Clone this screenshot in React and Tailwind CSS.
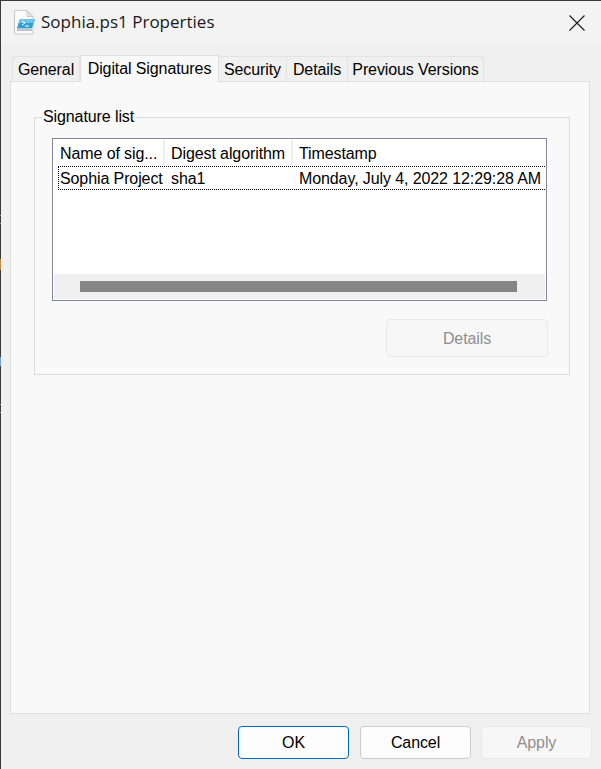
const font = { fontFamily: '"Liberation Sans", Arial, sans-serif', letterSpacing: '-0.1px' };

function FileIcon() {
  return (
    <svg className="w-[22px] h-[25px] shrink-0" viewBox="0 0 22 25">
      <path d="M1.500 0.500h12.500l6 6v17.500h-18.500z" fill="#fbfbfb" stroke="#c9c9c9" />
      <path d="M14 0.500v6h6z" fill="#e4e4e4" stroke="#c9c9c9" />
      <path d="M7 9h15l-3 9H4z" fill="#2f9fd8" />
      <path d="M7 9h15l-1 4H5.500z" fill="#6cc3ec" />
      <path d="M9 11l3 2-3 2" fill="none" stroke="#ffffff" strokeWidth="1" />
      <path d="M12 16h4" stroke="#ffffff" strokeWidth="1" />
      <path d="M4 18h15v3H4z" fill="#b9c9d3" />
    </svg>
  );
}

function Tab({ label, active, width }) {
  if (active) {
    return (
      <div className={`${width} h-[27px] -mb-px z-10 bg-[#f9f9f9] border border-b-0 border-[#dfdfdf] text-[16px] leading-[26px] text-center text-black`}>
        {label}
      </div>
    );
  }
  return (
    <div className={`${width} h-[25px] bg-[#f0f0f0] border border-b-0 border-l-0 first:border-l border-[#e3e3e3] text-[16px] leading-[26px] text-center text-black`}>
      {label}
    </div>
  );
}

function DialogButton({ label, kind, width = 'w-[111px]', height = 'h-[33px]', extra = '' }) {
  const styles = {
    primary: 'bg-[#fdfdfd] border-[#0067c0] text-black',
    normal: 'bg-[#fdfdfd] border-[#cccccc] text-black',
    disabled: 'bg-[#f7f7f7] border-[#e8e8e8] text-[#8f8f8f]',
  };
  return (
    <div className={`${width} ${height} ${extra} rounded-[4px] border flex items-center justify-center text-[16px] ${styles[kind]}`}>
      {label}
    </div>
  );
}

export default function App() {
  return (
    <div className="w-[601px] h-[769px] flex bg-[#f0f0f0] overflow-hidden" style={font}>
      {/* Bit of the desktop showing down the left edge */}
      <div className="w-px h-full flex flex-col shrink-0 bg-[#3a3a3a]">
        <div className="h-[215px] shrink-0" />
        <div className="h-px shrink-0 bg-[#9a9a9a]" />
        <div className="h-[7px] shrink-0" />
        <div className="h-px shrink-0 bg-[#9a9a9a]" />
        <div className="h-[35px] shrink-0" />
        <div className="h-[11px] shrink-0 bg-[#c08a3e]" />
        <div className="h-[87px] shrink-0" />
        <div className="h-[9px] shrink-0 bg-[#6fa3d8]" />
        <div className="h-[38px] shrink-0" />
        <div className="h-px shrink-0 bg-[#9a9a9a]" />
        <div className="h-[7px] shrink-0" />
        <div className="h-px shrink-0 bg-[#9a9a9a]" />
      </div>

      <div className="flex-1 flex flex-col min-w-0">
        <div className="h-px bg-[#3a3a3a] shrink-0" />

        {/* Title bar */}
        <div className="h-[43px] shrink-0 bg-[#f3f3f3] flex items-center pl-[12px] pr-[16px]">
          <FileIcon />
          <div className="ml-[6px] mb-[2px] text-[#1a1a1a]" style={{ fontFamily: '"Open Sans", sans-serif', fontSize: '17px', letterSpacing: '0' }}>
            Sophia.ps1 Properties
          </div>
          <svg className="ml-auto w-[16px] h-[16px]" viewBox="0 0 16 16">
            <path d="M0.500 0.500l15 15M15.500 0.500l-15 15" stroke="#1a1a1a" strokeWidth="1.100" fill="none" />
          </svg>
        </div>

        {/* Tabs */}
        <div className="h-[37px] shrink-0 pl-[11px] flex items-end">
          <Tab label="General" width="w-[68px]" />
          <Tab label="Digital Signatures" width="w-[139px]" active />
          <Tab label="Security" width="w-[68px]" />
          <Tab label="Details" width="w-[61px]" />
          <Tab label="Previous Versions" width="w-[136px]" />
        </div>

        {/* Tab panel */}
        <div className="ml-[9px] w-[580px] h-[633px] shrink-0 bg-[#f9f9f9] border border-[#dfdfdf] pt-[26px] pl-[23px]">
          <fieldset className="w-[536px] h-[267px] border border-[#dcdcdc] pl-[17px] pr-[21px]">
            <legend className="ml-[-10px] px-[1px] text-[16px] leading-[18px] text-black">Signature list</legend>

            <div className="mt-[12px] w-[495px] h-[163px] bg-white border border-[#82879a] flex flex-col text-[16px] text-black">
              <div className="h-[27px] shrink-0 flex items-center leading-[27px]">
                <div className="w-[112px] pl-[7px] border-r-2 border-[#eeeeee] h-[26px]">Name of sig...</div>
                <div className="w-[128px] pl-[6px] border-r-2 border-[#eeeeee] h-[26px]">Digest algorithm</div>
                <div className="pl-[6px] h-[26px]">Timestamp</div>
              </div>
              <div className="ml-[5px] w-[487px] h-[24px] shrink-0 flex items-center border-y border-l border-dotted border-black pt-[2px] leading-[20px]">
                <div className="w-[107px] pl-[1px]">Sophia Project</div>
                <div className="w-[128px] pl-[5px]">sha1</div>
                <div className="pl-[5px] whitespace-nowrap">Monday, July 4, 2022 12:29:28 AM</div>
              </div>
              <div className="flex-1" />
              <div className="h-[25px] shrink-0 bg-[#f0f0f0] mx-px mb-px flex items-center pl-[26px]">
                <div className="w-[437px] h-[11px] bg-[#858585]" />
              </div>
            </div>

            <div className="mt-[18px] flex justify-end">
              <DialogButton label="Details" kind="disabled" width="w-[162px]" height="h-[38px]" extra="pt-[2px]" />
            </div>
          </fieldset>
        </div>

        {/* Bottom buttons */}
        <div className="flex-1 flex justify-end pt-[12px] pr-[9px]">
          <DialogButton label="OK" kind="primary" />
          <div className="w-[11px]" />
          <DialogButton label="Cancel" kind="normal" />
          <div className="w-[10px]" />
          <DialogButton label="Apply" kind="disabled" />
        </div>
      </div>
    </div>
  );
}
